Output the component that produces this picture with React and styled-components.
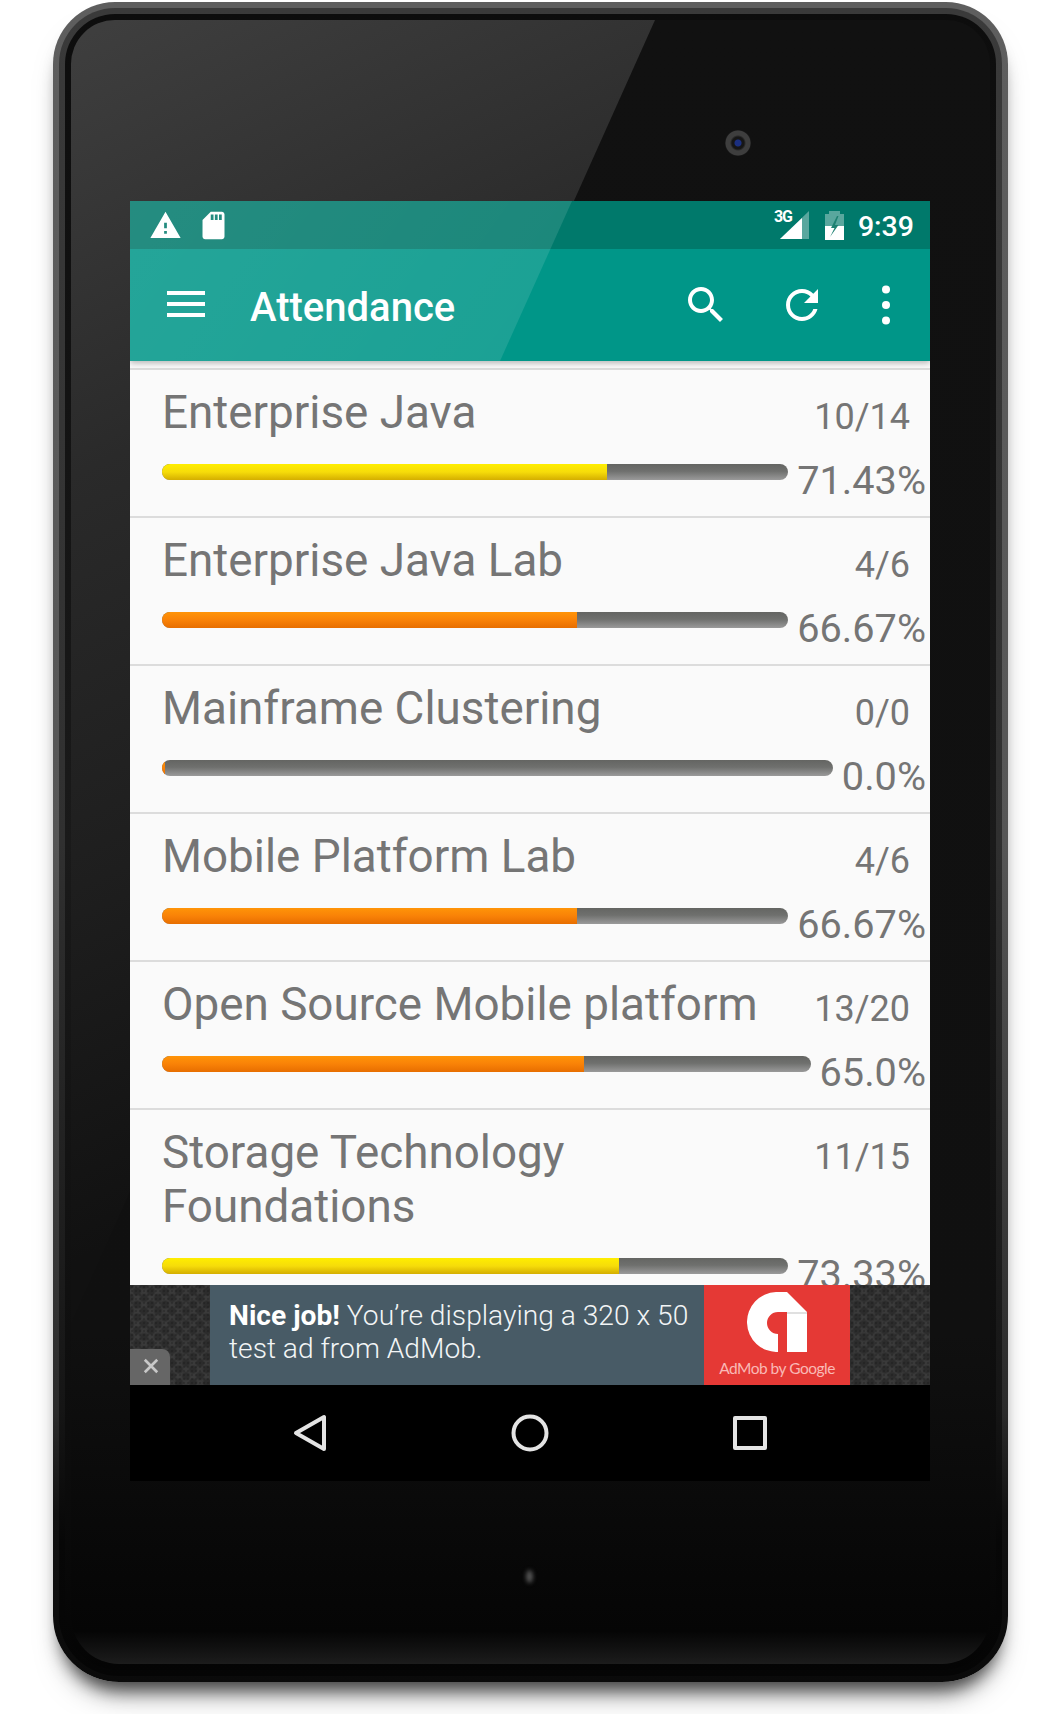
import React from "react";
import styled, { createGlobalStyle } from "styled-components";

const GlobalStyle = createGlobalStyle`
  html, body {
    margin: 0;
    background: #fff;
  }
  body {
    font-family: Roboto, "Liberation Sans", sans-serif;
  }
`;

const Page = styled.div`
  width: 1064px;
  height: 1714px;
  padding: 2px 0 0 53px;
  box-sizing: border-box;
  overflow: hidden;
`;

const DeviceRim = styled.div`
  width: 955px;
  height: 1680px;
  box-sizing: border-box;
  padding: 6px;
  border-radius: 62px 62px 66px 66px;
  background: linear-gradient(180deg, #5e5e5e 0%, #565656 50%, #2a2a2a 84%, #111 90%, #0a0a0a 100%);
  box-shadow: 0 16px 16px -8px rgba(0, 0, 0, 0.55), 0 22px 30px -14px rgba(0, 0, 0, 0.5);
`;

const DeviceBand = styled.div`
  height: 100%;
  box-sizing: border-box;
  padding: 6px;
  border-radius: 56px 56px 60px 60px;
  background: linear-gradient(180deg, #3a3a3a 0%, #303030 50%, #151515 84%, #070707 92%, #050505 100%);
`;

const DeviceLip = styled.div`
  height: 100%;
  box-sizing: border-box;
  padding: 6px;
  border-radius: 50px 50px 54px 54px;
  background: linear-gradient(180deg, #0d0d0d, #1a1a1a 50%, #0c0c0c 88%, #040404);
`;

const Face = styled.div`
  position: relative;
  height: 100%;
  box-sizing: border-box;
  padding: 181px 0 0 59px;
  border-radius: 44px 44px 48px 48px;
  overflow: hidden;
  background: linear-gradient(180deg, #111 0%, #101010 80%, #050505 98%, #1c1c1c 100%);

  &::before {
    content: "";
    position: absolute;
    inset: 0;
    clip-path: polygon(0 0, 584px 0, 0 1303px);
    background: linear-gradient(155deg, #3f3f3f 0%, #2a2a2a 22%, #1e1e1e 42%, #111 60%);
  }
`;

const Camera = styled.div`
  position: absolute;
  left: 654px;
  top: 110px;
  width: 26px;
  height: 26px;
  border-radius: 50%;
  background: radial-gradient(circle, #1b2f80 0 3px, #161616 4px 6px, #3e3e3e 8px 12px, #1c1c1c 13px);
`;

const Sensor = styled.div`
  position: absolute;
  left: 455px;
  top: 1550px;
  width: 7px;
  height: 13px;
  border-radius: 50%;
  background: #555;
  filter: blur(2px);
`;

const Screen = styled.div`
  position: relative;
  width: 800px;
  height: 1280px;
  display: flex;
  flex-direction: column;
  overflow: hidden;
`;

const Head = styled.header`
  position: relative;
  z-index: 1;
  box-shadow: 0 2px 6px rgba(0, 0, 0, 0.28);

  &::after {
    content: "";
    position: absolute;
    inset: 0;
    clip-path: polygon(0 0, 442px 0, 370px 160px, 0 160px);
    background: linear-gradient(125deg, rgba(255, 255, 255, 0.145), rgba(255, 255, 255, 0.075));
    pointer-events: none;
  }
`;

const StatusBar = styled.div`
  height: 48px;
  display: flex;
  align-items: center;
  padding: 0 16px 0 19px;
  background: #00796b;
  color: #fff;
`;

const StatusIcon = styled.svg`
  display: block;
  width: 33px;
  height: 33px;
  margin-right: 15px;
  fill: #fff;
`;

const StatusRight = styled.div`
  margin-left: auto;
  display: flex;
  align-items: center;
`;

const SignalWrap = styled.div`
  position: relative;
  width: 30px;
  height: 28px;
  margin-right: 15px;
`;

const NetLabel = styled.span`
  position: absolute;
  left: -6px;
  top: -2px;
  font-size: 16px;
  line-height: 16px;
  font-weight: 700;
  letter-spacing: -1px;
`;

const Clock = styled.span`
  margin-left: 14px;
  padding-top: 3px;
  font-size: 28.5px;
  font-weight: 500;
  line-height: 45px;
`;

const Toolbar = styled.div`
  height: 112px;
  display: flex;
  align-items: center;
  padding-left: 37px;
  box-sizing: border-box;
  background: #009688;
  color: #fff;
`;

const Hamburger = styled.div`
  width: 38px;
  height: 26px;
  margin-bottom: 2px;
  display: flex;
  flex-direction: column;
  justify-content: space-between;

  span {
    display: block;
    height: 4px;
    background: #fff;
  }
`;

const ToolbarTitle = styled.h1`
  margin: 6px 0 0 45px;
  font-size: 40px;
  line-height: 48px;
  font-weight: 500;
  flex: 1;
`;

const ActionIcon = styled.svg`
  display: block;
  width: 48px;
  height: 48px;
  margin-right: ${(p) => p.$gap}px;
  fill: #fff;
`;

const List = styled.main`
  flex: 1;
  min-height: 0;
  padding-top: 7px;
  background: #fafafa;
  overflow: hidden;
`;

const Rows = styled.div`
  border-top: 2px solid #dcdcdc;
`;

const Row = styled.div`
  min-height: 148px;
  box-sizing: border-box;
  padding: 16px 4px 0 32px;
  border-bottom: 2px solid #dcdcdc;
  color: #757575;
`;

const TopLine = styled.div`
  display: flex;
  align-items: flex-start;
`;

const Title = styled.div`
  flex: 1;
  padding-right: 40px;
  font-size: 45.8px;
  line-height: 54px;
`;

const Count = styled.div`
  margin: 10px 16px 0 0;
  font-size: 36px;
  line-height: 42px;
`;

const BarLine = styled.div`
  display: flex;
  align-items: flex-start;
  margin-top: 18px;
`;

const Bar = styled.div`
  flex: 1;
  height: 16px;
  margin-top: 6px;
  border-radius: 8px;
  overflow: hidden;
  background: linear-gradient(180deg, #646562 0%, #6f706e 45%, #9a9a9a 100%);
`;

const barColors = {
  yellow: "linear-gradient(180deg, #ffee00 0%, #f6dc0a 50%, #d4ae00 100%)",
  orange: "linear-gradient(180deg, #ff9408 0%, #f98207 50%, #e76e00 100%)",
};

const BarFill = styled.div`
  height: 100%;
  background: ${(p) => barColors[p.$tone]};
`;

const Percent = styled.div`
  margin: -1px 0 0 9px;
  font-size: 39.7px;
  line-height: 48px;
`;

const Ad = styled.aside`
  position: relative;
  height: 100px;
  display: flex;
`;

const AdPattern = styled.div`
  width: 80px;
  background-color: #3a3a3a;
  background-image:
    radial-gradient(circle, rgba(0, 0, 0, 0.24) 0 3px, transparent 5px),
    radial-gradient(circle, rgba(0, 0, 0, 0.24) 0 3px, transparent 5px),
    radial-gradient(circle, #303030 0 1px, transparent 1.6px);
  background-size: 14px 13px, 14px 13px, 4px 4px;
  background-position: 0 0, 7px 6.5px, 0 0;
`;

const AdClose = styled.div`
  position: absolute;
  left: 0;
  bottom: 0;
  width: 40px;
  height: 36px;
  display: flex;
  align-items: center;
  justify-content: center;
  padding: 0 0 2px 1px;
  box-sizing: border-box;
  border-top-right-radius: 8px;
  background: #666;
  color: #c8c8c8;

  svg {
    display: block;
    width: 16px;
    height: 16px;
  }
`;

const AdCopy = styled.div`
  width: 494px;
  box-sizing: border-box;
  padding: 14px 0 0 19px;
  background: #485b66;
  color: #f2f5f6;
  font-size: 28.2px;
  font-weight: 300;
  line-height: 33px;

  b {
    font-weight: 700;
    color: #fff;
  }
`;

const AdBrand = styled.div`
  width: 146px;
  display: flex;
  flex-direction: column;
  align-items: center;
  padding-top: 7px;
  box-sizing: border-box;
  background: #e53935;
`;

const AdLogo = styled.svg`
  display: block;
  width: 60px;
  height: 60px;
`;

const AdBrandText = styled.div`
  margin-top: 6px;
  color: #f9b9b6;
  font-family: Lato, Roboto, sans-serif;
  font-size: 15.5px;
  line-height: 20px;
  letter-spacing: -0.5px;
  white-space: nowrap;
`;

const NavBar = styled.nav`
  height: 96px;
  display: flex;
  align-items: center;
  justify-content: center;
  gap: 172px;
  background: #000;
`;

const NavIcon = styled.svg`
  display: block;
  width: 48px;
  height: 48px;
  fill: none;
  stroke: #e4e4e4;
  stroke-width: 4;
  stroke-linejoin: round;
`;

const subjects = [
  { name: "Enterprise Java", count: "10/14", percent: "71.43%", value: 71, tone: "yellow" },
  { name: "Enterprise Java Lab", count: "4/6", percent: "66.67%", value: 66.2, tone: "orange" },
  { name: "Mainframe Clustering", count: "0/0", percent: "0.0%", value: 0.4, tone: "orange" },
  { name: "Mobile Platform Lab", count: "4/6", percent: "66.67%", value: 66.2, tone: "orange" },
  { name: "Open Source Mobile platform", count: "13/20", percent: "65.0%", value: 65, tone: "orange" },
  { name: "Storage Technology Foundations", count: "11/15", percent: "73.33%", value: 73, tone: "yellow" },
];

const App = () => {
  return (
    <Page>
      <GlobalStyle />
      <DeviceRim>
        <DeviceBand>
          <DeviceLip>
            <Face>
              <Camera />
              <Sensor />
              <Screen>
                <Head>
                  <StatusBar>
                    <StatusIcon viewBox="0 0 24 24">
                      <path d="M1 21h22L12 2 1 21zm12-3h-2v-2h2v2zm0-4h-2v-4h2v4z" />
                    </StatusIcon>
                    <StatusIcon viewBox="0 0 24 24">
                      <path d="M18 2h-8L4.02 8 4 20c0 1.1.9 2 2 2h12c1.1 0 2-.9 2-2V4c0-1.1-.9-2-2-2zm-6 6h-2V4h2v4zm3 0h-2V4h2v4zm3 0h-2V4h2v4z" />
                    </StatusIcon>
                    <StatusRight>
                      <SignalWrap>
                        <NetLabel>3G</NetLabel>
                        <svg width="30" height="28" viewBox="0 0 30 28">
                          <polygon points="0,28 29,0 29,28" fill="#fff" opacity="0.35" />
                          <polygon points="0,28 22,7 22,28" fill="#fff" />
                        </svg>
                      </SignalWrap>
                      <svg width="19" height="29" viewBox="0 0 19 29">
                        <path d="M4 0h11v3h4v12H0V3h4z" fill="#fff" opacity="0.35" />
                        <path d="M0 15h19v14H0z" fill="#fff" />
                        <polygon points="12,5 6,17 9.5,17 5,26 13.5,14 10,14 13.5,5" fill="#1f8172" />
                      </svg>
                      <Clock>9:39</Clock>
                    </StatusRight>
                  </StatusBar>
                  <Toolbar>
                    <Hamburger>
                      <span />
                      <span />
                      <span />
                    </Hamburger>
                    <ToolbarTitle>Attendance</ToolbarTitle>
                    <ActionIcon viewBox="0 0 24 24" $gap={48}>
                      <path d="M15.5 14h-.79l-.28-.27C15.41 12.59 16 11.11 16 9.5 16 5.91 13.09 3 9.5 3S3 5.91 3 9.5 5.91 16 9.5 16c1.61 0 3.09-.59 4.23-1.57l.27.28v.79l5 4.99L20.49 19l-4.99-5zm-6 0C7.01 14 5 11.99 5 9.5S7.01 5 9.5 5 14 7.01 14 9.5 11.99 14 9.5 14z" />
                    </ActionIcon>
                    <ActionIcon viewBox="0 0 24 24" $gap={36}>
                      <path d="M17.65 6.35C16.2 4.9 14.21 4 12 4c-4.42 0-7.99 3.58-7.99 8s3.57 8 7.99 8c3.73 0 6.84-2.55 7.73-6h-2.08c-.82 2.33-3.04 4-5.65 4-3.31 0-6-2.69-6-6s2.69-6 6-6c1.66 0 3.14.69 4.22 1.78L13 11h7V4l-2.35 2.35z" />
                    </ActionIcon>
                    <ActionIcon viewBox="0 0 24 24" $gap={20}>
                      <circle cx="12" cy="4.2" r="2" />
                      <circle cx="12" cy="12" r="2" />
                      <circle cx="12" cy="19.8" r="2" />
                    </ActionIcon>
                  </Toolbar>
                </Head>
                <List>
                  <Rows>
                    {subjects.map((s) => (
                      <Row key={s.name}>
                        <TopLine>
                          <Title>{s.name}</Title>
                          <Count>{s.count}</Count>
                        </TopLine>
                        <BarLine>
                          <Bar>
                            <BarFill $tone={s.tone} style={{ width: `${s.value}%` }} />
                          </Bar>
                          <Percent>{s.percent}</Percent>
                        </BarLine>
                      </Row>
                    ))}
                  </Rows>
                </List>
                <Ad>
                  <AdPattern />
                  <AdClose>
                    <svg viewBox="0 0 18 18">
                      <path d="M2 2l14 14M16 2L2 16" stroke="currentColor" strokeWidth="3" />
                    </svg>
                  </AdClose>
                  <AdCopy>
                    <b>Nice job!</b> You’re displaying a 320 x 50 test ad from AdMob.
                  </AdCopy>
                  <AdBrand>
                    <AdLogo viewBox="0 0 60 60">
                      <path d="M29 0H40L60 20V60H40V20H31A11 11 0 0 0 31 42V60A30 30 0 0 1 29 0Z" fill="#fff" />
                      <path d="M40 20H60V22H40Z" fill="#e0e0e0" />
                    </AdLogo>
                    <AdBrandText>AdMob by Google</AdBrandText>
                  </AdBrand>
                  <AdPattern />
                </Ad>
                <NavBar>
                  <NavIcon viewBox="0 0 48 48">
                    <path d="M38 8V40L10 24Z" />
                  </NavIcon>
                  <NavIcon viewBox="0 0 48 48">
                    <circle cx="24" cy="24" r="16.5" />
                  </NavIcon>
                  <NavIcon viewBox="0 0 48 48">
                    <path d="M9 9H39V39H9Z" />
                  </NavIcon>
                </NavBar>
              </Screen>
            </Face>
          </DeviceLip>
        </DeviceBand>
      </DeviceRim>
    </Page>
  );
};

export default App;
